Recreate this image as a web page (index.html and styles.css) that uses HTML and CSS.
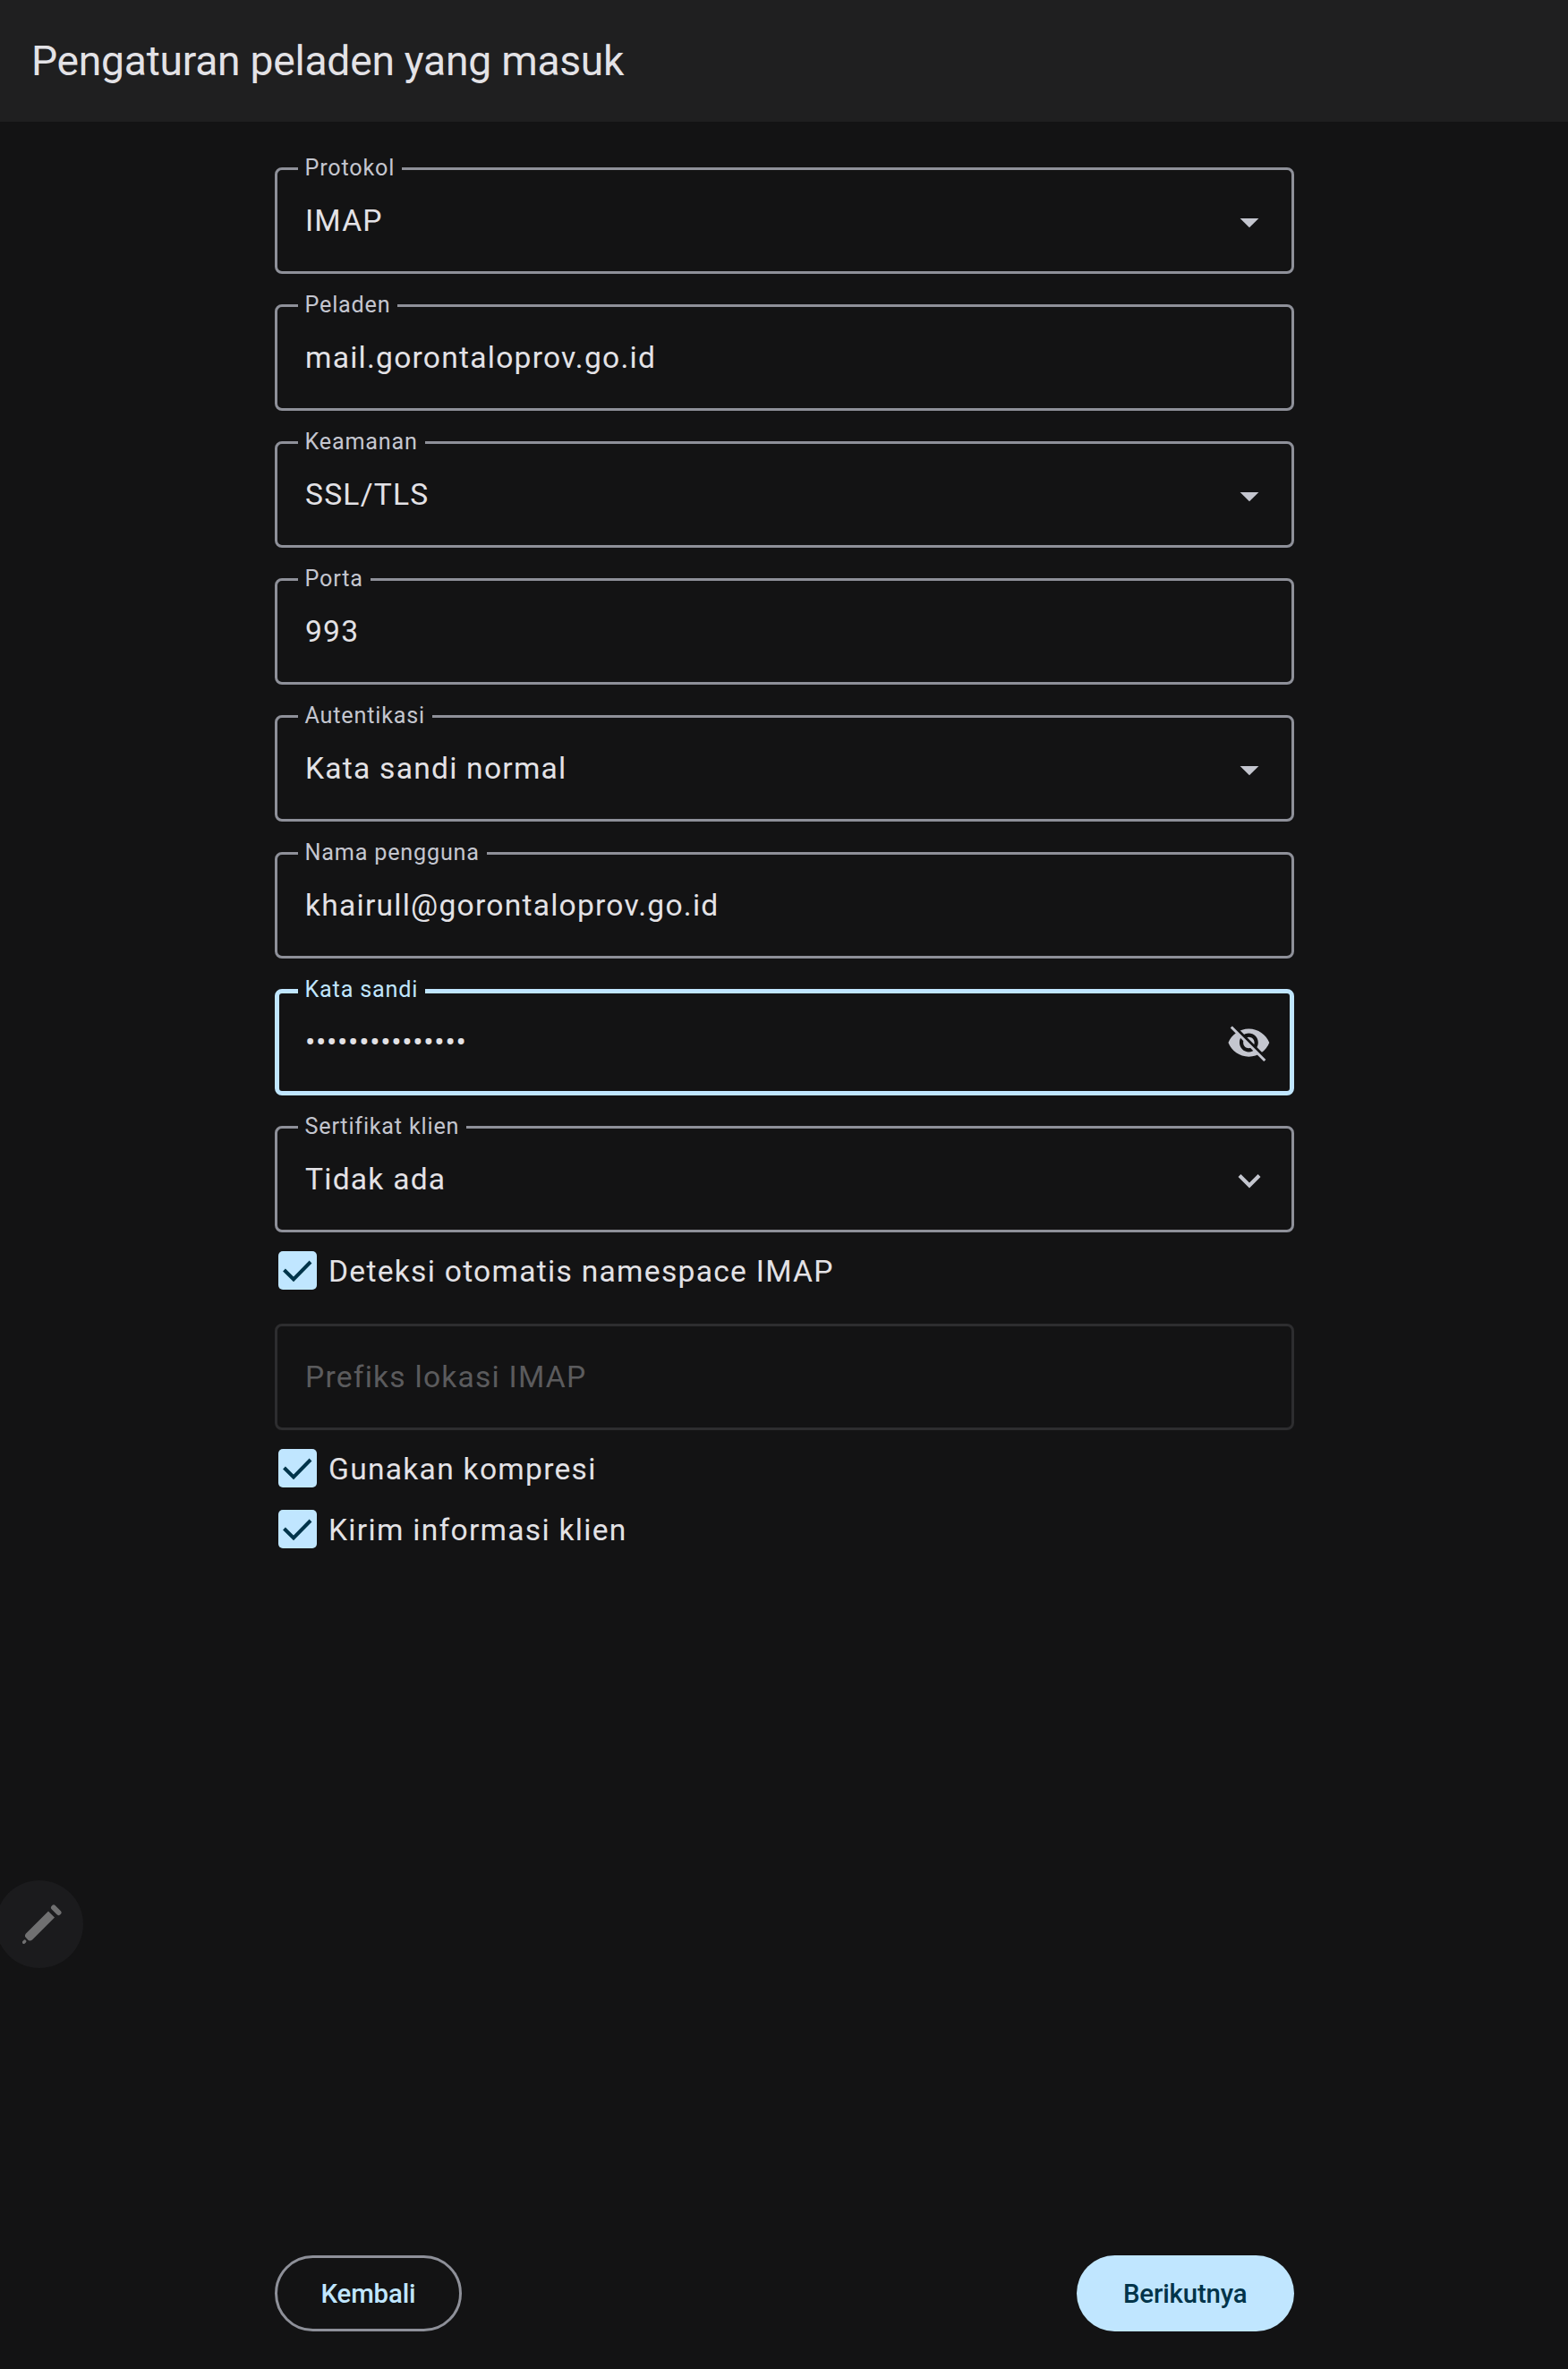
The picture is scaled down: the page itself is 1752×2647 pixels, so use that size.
FILE: index.html
```html
<!DOCTYPE html>
<html lang="id">
<head>
<meta charset="utf-8">
<title>Pengaturan peladen yang masuk</title>
<link rel="stylesheet" href="styles.css">
</head>
<body>
<header class="topbar"><h1 class="title">Pengaturan peladen yang masuk</h1></header>
<main class="form">
  <div class="fields">
    <div class="field"><span class="label">Protokol</span><span class="value">IMAP</span>
      <svg class="icon" viewBox="0 0 24 24"><path d="M7 10.5l5 5 5-5z"/></svg></div>
    <div class="field"><span class="label">Peladen</span><span class="value">mail.gorontaloprov.go.id</span></div>
    <div class="field"><span class="label">Keamanan</span><span class="value">SSL/TLS</span>
      <svg class="icon" viewBox="0 0 24 24"><path d="M7 10.5l5 5 5-5z"/></svg></div>
    <div class="field"><span class="label">Porta</span><span class="value">993</span></div>
    <div class="field"><span class="label">Autentikasi</span><span class="value">Kata sandi normal</span>
      <svg class="icon" viewBox="0 0 24 24"><path d="M7 10.5l5 5 5-5z"/></svg></div>
    <div class="field"><span class="label">Nama pengguna</span><span class="value">khairull@gorontaloprov.go.id</span></div>
    <div class="field focused"><span class="label">Kata sandi</span><span class="value dots">•••••••••••••••</span>
      <svg class="icon" viewBox="0 0 24 24">
        <path fill-rule="evenodd" d="M11.7 4.5C6.7 4.5 2.43 7.61.7 12c1.73 4.39 6 7.5 11 7.5s9.27-3.11 11-7.5c-1.73-4.39-6-7.5-11-7.5zM11.7 17c-2.76 0-5-2.24-5-5s2.24-5 5-5 5 2.24 5 5-2.24 5-5 5zM11.7 9c-1.66 0-3 1.34-3 3s1.34 3 3 3 3-1.34 3-3-1.34-3-3-3z"/>
        <path class="slash-gap" d="M2.9 2.5l18 18"/>
        <path class="slash" d="M2.3 3.6l18 18"/>
      </svg></div>
    <div class="field"><span class="label">Sertifikat klien</span><span class="value">Tidak ada</span>
      <svg class="icon" viewBox="0 0 24 24"><path d="M7.41 9.09L12 13.67l4.59-4.58L18 10.5l-6 6-6-6z"/></svg></div>
  </div>

  <div class="check-row first">
    <span class="box"><svg viewBox="0 0 43 43"><path d="M6.5 21L17 31.5 36 12"/></svg></span>
    <span class="check-text">Deteksi otomatis namespace IMAP</span>
  </div>
  <div class="field disabled"><span class="value">Prefiks lokasi IMAP</span></div>
  <div class="check-row after-field">
    <span class="box"><svg viewBox="0 0 43 43"><path d="M6.5 21L17 31.5 36 12"/></svg></span>
    <span class="check-text">Gunakan kompresi</span>
  </div>
  <div class="check-row">
    <span class="box"><svg viewBox="0 0 43 43"><path d="M6.5 21L17 31.5 36 12"/></svg></span>
    <span class="check-text">Kirim informasi klien</span>
  </div>

  <div class="actions">
    <button class="btn outlined" type="button">Kembali</button>
    <button class="btn filled" type="button">Berikutnya</button>
  </div>
</main>
<button class="fab" type="button" aria-label="Edit">
  <svg viewBox="0 0 44 44"><path class="pen-body" d="M3.5 36.5c-1-1-.6-2.6.4-4L29 7.5l7 7-25 25c-1.4 1-3.2 1.4-4.3.6z"/><path class="pen-cap" d="M35 3.5l5.5 5.5"/><path class="pen-tip" d="M1.6 42.2l1-1"/></svg>
</button>
</body>
</html>
```
FILE: styles.css
```css
* { box-sizing: border-box; }
html, body { margin: 0; padding: 0; }
body {
  position: relative;
  width: 1752px;
  height: 2647px;
  display: flex;
  flex-direction: column;
  overflow: hidden;
  background: #131314;
  color: #e3e2e6;
  font-family: Roboto, "Noto Sans", sans-serif;
}
.topbar {
  height: 136px;
  flex: none;
  display: flex;
  align-items: center;
  padding-left: 35px;
  background: #1f1f20;
}
.title {
  margin: 0;
  font-size: 46.2px;
  font-weight: 400;
  line-height: 1;
  letter-spacing: -0.25px;
  color: #e3e2e6;
}
.form {
  flex: 1;
  width: 1139px;
  margin: 0 auto;
  padding: 51px 0 42px;
  display: flex;
  flex-direction: column;
}
.fields {
  display: flex;
  flex-direction: column;
  gap: 34px;
}
.field {
  --bw: 3px;
  position: relative;
  height: 119px;
  flex: none;
  display: flex;
  align-items: center;
  padding: 0 22px 0 31.5px;
  border: var(--bw) solid #8e9099;
  border-radius: 8px;
}
.field.focused {
  --bw: 5px;
  padding-left: 29.5px;
  padding-right: 20px;
  border-color: #c0e6ff;
}
.field.disabled {
  border-color: #2d2d2f;
  margin-top: 25px;
}
.label {
  position: absolute;
  top: calc(var(--bw) / -2);
  left: calc(26px - var(--bw));
  margin-top: -1px;
  padding: 0 8px;
  transform: translateY(-50%);
  background: #131314;
  font-size: 25.2px;
  line-height: 30px;
  letter-spacing: 0.8px;
  color: #c4c6cf;
  white-space: nowrap;
}
.focused .label { color: #c0e6ff; margin-top: -2px; }
.value {
  flex: 1;
  padding-top: 1.5px;
  font-size: 33.6px;
  line-height: 50px;
  letter-spacing: 1.24px;
  color: #e3e2e6;
}
.disabled .value { color: #5b5b5d; }
.dots { letter-spacing: 0.7px; }
.icon {
  flex: none;
  width: 50px;
  height: 50px;
  fill: #c4c6cf;
}
.slash-gap { fill: none; stroke: #131314; stroke-width: 1.6; }
.slash { fill: none; stroke: #c4c6cf; stroke-width: 1.5; }
.check-row {
  flex: none;
  height: 68px;
  display: flex;
  align-items: center;
  gap: 13.5px;
  padding-left: 4px;
}
.check-row.first { margin-top: 8.5px; }
.check-row.after-field { margin-top: 9px; }
.box {
  width: 43px;
  height: 43px;
  flex: none;
  border-radius: 5px;
  background: #c0e6ff;
}
.box svg {
  display: block;
  width: 43px;
  height: 43px;
  fill: none;
  stroke: #00344a;
  stroke-width: 4;
}
.check-text {
  padding-top: 2px;
  font-size: 33.6px;
  line-height: 50px;
  letter-spacing: 1.28px;
  color: #e3e2e6;
}
.actions {
  margin-top: auto;
  display: flex;
  justify-content: space-between;
}
.btn {
  height: 85px;
  padding: 0 52px;
  border-radius: 43px;
  font-family: Roboto, "Noto Sans", sans-serif;
  font-size: 29.4px;
  font-weight: 500;
  letter-spacing: -0.15px;
}
.btn.outlined {
  padding: 0 49px;
  background: transparent;
  border: 3px solid #8e9099;
  color: #c0e6ff;
}
.btn.filled {
  background: #c0e6ff;
  border: 0;
  color: #00344a;
}
.fab {
  position: absolute;
  left: -5px;
  top: 2101px;
  width: 98px;
  height: 98px;
  padding: 0 0 0 6px;
  border: 0;
  border-radius: 50%;
  display: flex;
  align-items: center;
  justify-content: center;
  background: #1b1b1d;
}
.fab svg { width: 44px; height: 44px; }
.pen-body { fill: #707071; }
.pen-cap, .pen-tip { fill: none; stroke: #707071; stroke-linecap: round; stroke-width: 6; }
.pen-tip { stroke-width: 3.5; }
```
